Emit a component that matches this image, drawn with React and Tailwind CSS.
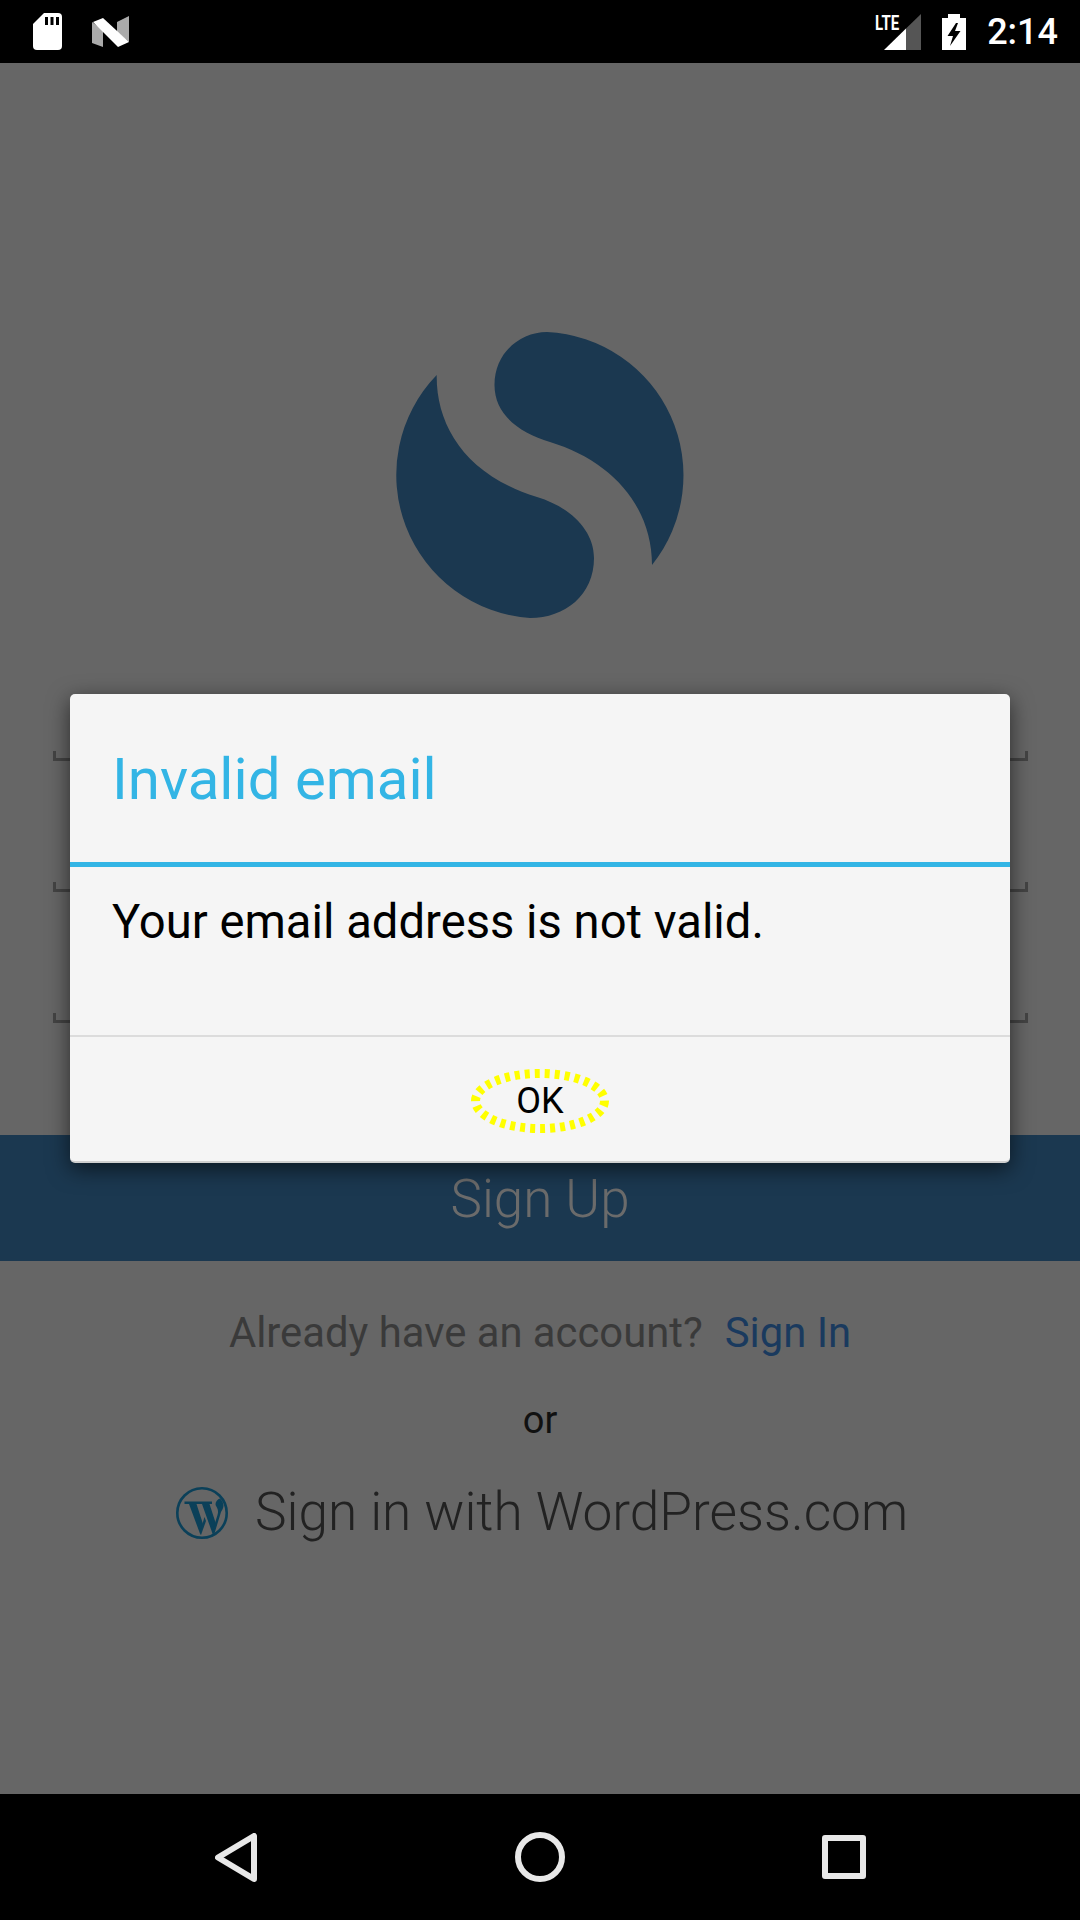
function StatusBar() {
  return (
    <div className="flex h-[63px] shrink-0 items-center justify-between bg-black">
      <div className="flex items-center gap-[30px] pl-[33px]">
        <svg width="29" height="37" viewBox="0 0 29 37">
          <path d="M11 0H25A4 4 0 0 1 29 4V33A4 4 0 0 1 25 37H4A4 4 0 0 1 0 33V11Z" fill="#fff" />
          <path d="M12 4h3v8h-3zM17.500 4h3v8h-3zM23 4h3v8h-3z" fill="#000" />
        </svg>
        <svg width="37" height="31" viewBox="0 0 37 31">
          <path d="M0 6L11 14V31L0 27Z" fill="#aaa" />
          <path d="M25 6L37 0V26L25 16Z" fill="#aaa" />
          <path d="M1 6L11 2L37 26L26 31Z" fill="#fff" />
        </svg>
      </div>
      <div className="flex items-center pr-[22px]">
        <div className="relative h-[36px] w-[46px]">
          <span className="absolute top-[-1px] left-0 origin-left scale-x-75 text-[20px] leading-[20px] font-bold text-white">LTE</span>
          <svg className="absolute inset-0" width="46" height="36" viewBox="0 0 46 36">
            <path d="M31 14.600L46 0V36H31Z" fill="#555" />
            <path d="M9 36L31 14.600V36Z" fill="#fff" />
          </svg>
        </div>
        <svg className="ml-[21px]" width="24" height="36" viewBox="0 0 24 36">
          <path d="M6 0H18V4H24V36H0V4H6Z" fill="#fff" />
          <path d="M14 9L5.500 22H11L8 32L18.500 17H13L16 9Z" fill="#000" />
        </svg>
        <span className="ml-[21px] text-[36px] leading-none font-medium text-white">2:14</span>
      </div>
    </div>
  );
}

function NavBar() {
  return (
    <div className="flex h-[126px] shrink-0 items-center bg-black pl-[215px]">
      <svg width="42" height="49" viewBox="0 0 42 49" fill="none" stroke="#e8e8e8" strokeWidth="6" strokeLinejoin="round">
        <path d="M3 24.500L39 3V46Z" />
      </svg>
      <svg className="ml-[258px]" width="50" height="50" viewBox="0 0 50 50" fill="none" stroke="#e8e8e8" strokeWidth="6">
        <circle cx="25" cy="25" r="22" />
      </svg>
      <svg className="ml-[257px]" width="44" height="44" viewBox="0 0 44 44" fill="none" stroke="#e8e8e8" strokeWidth="6" strokeLinejoin="round">
        <rect x="3" y="3" width="38" height="38" />
      </svg>
    </div>
  );
}

function Logo() {
  return (
    <svg width="340" height="320" viewBox="0 0 340 320" fill="#1b3850">
      <path d="M177 22A143.500 143.500 0 0 1 282 255C282 195 240 150 180 132C150 123 124.500 105 124.500 75C124.500 43 150 22 177 22Z" />
      <path d="M66.700 65C66 115 95 165 167 187C200 197 224 220 224 248C224 285 195 308 160 308A143.500 143.500 0 0 1 66.700 65Z" />
    </svg>
  );
}

function WordPressIcon() {
  return (
    <svg width="52" height="52" viewBox="0 0 52 52" fill="#0b4059">
      <circle cx="26" cy="26" r="24.700" fill="none" stroke="#0b4059" strokeWidth="2.600" />
      <path d="M8.500 14.500H23V17H20.500L27 37L24.500 48L13 17H8.500Z" />
      <path d="M24 45L28.500 30L30 34L25 48Z" />
      <path d="M23 14.500H36V17H33.500L40 37L37 48L26 17H23Z" />
      <path d="M36.500 44L41.500 28C43 23 41 21 39.800 18.500C38.800 15.500 41 12.500 44 11.500C46 13 47.500 16 47.500 19C47 22 46 23 45 25L38 48Z" />
    </svg>
  );
}

function FieldLine() {
  return (
    <div className="flex h-[131px] items-end">
      <div className="h-[10px] w-full border-x-[3px] border-b-[3px] border-[#444]" />
    </div>
  );
}

function Dialog() {
  return (
    <div className="absolute inset-0 flex items-center justify-center">
      <div className="w-[940px] overflow-hidden rounded-[5px] border-b-2 border-[#cfcfcf] bg-[#f5f5f5] shadow-[0_6px_22px_rgba(0,0,0,0.6)]">
        <div className="flex h-[168px] items-center px-[42px] pt-[4px] text-[58.200px] text-[#33b5e5]">Invalid email</div>
        <div className="h-[5px] bg-[#33b5e5]" />
        <div className="h-[168px] px-[42px] pt-[27px] text-[47.200px] leading-[56px] text-black">Your email address is not valid.</div>
        <div className="h-[2px] bg-[#dcdcdc]" />
        <div className="flex h-[124px] items-center justify-center pt-[3px]">
          <div className="relative flex h-[64px] w-[138px] items-center justify-center text-[36px] text-black">
            OK
            <svg className="absolute inset-0" width="138" height="64" viewBox="0 0 138 64" fill="none">
              <ellipse cx="69" cy="32" rx="64.500" ry="27.500" stroke="#ffff00" strokeWidth="9" strokeDasharray="5 5" />
            </svg>
          </div>
        </div>
      </div>
    </div>
  );
}

export default function App() {
  return (
    <div className="flex h-[1920px] w-[1080px] flex-col overflow-hidden bg-[#666] font-['Roboto',sans-serif]">
      <StatusBar />
      <div className="relative flex flex-1 flex-col">
        <div className="flex justify-center pt-[247px]">
          <Logo />
        </div>
        <div className="pr-[52px] pl-[53px]">
          <FieldLine />
          <FieldLine />
          <FieldLine />
        </div>
        <div className="mt-[112px] flex h-[126px] items-center justify-center bg-[#1b3850] pt-[3px] text-[53px] font-light text-[#6b6b6b]">Sign Up</div>
        <div className="mt-[41px] flex items-center justify-center gap-[22px] text-[41.800px]">
          <span className="text-[#3a3a3a]">Already have an account?</span>
          <span className="text-[#1a3a5e]">Sign In</span>
        </div>
        <div className="mt-[27px] text-center text-[38px] text-[#111]">or</div>
        <div className="mt-[24px] flex items-center justify-center gap-[27px] pl-[4px]">
          <WordPressIcon />
          <span className="text-[53.200px] font-light text-[#222]">Sign in with WordPress.com</span>
        </div>
        <Dialog />
      </div>
      <NavBar />
    </div>
  );
}
